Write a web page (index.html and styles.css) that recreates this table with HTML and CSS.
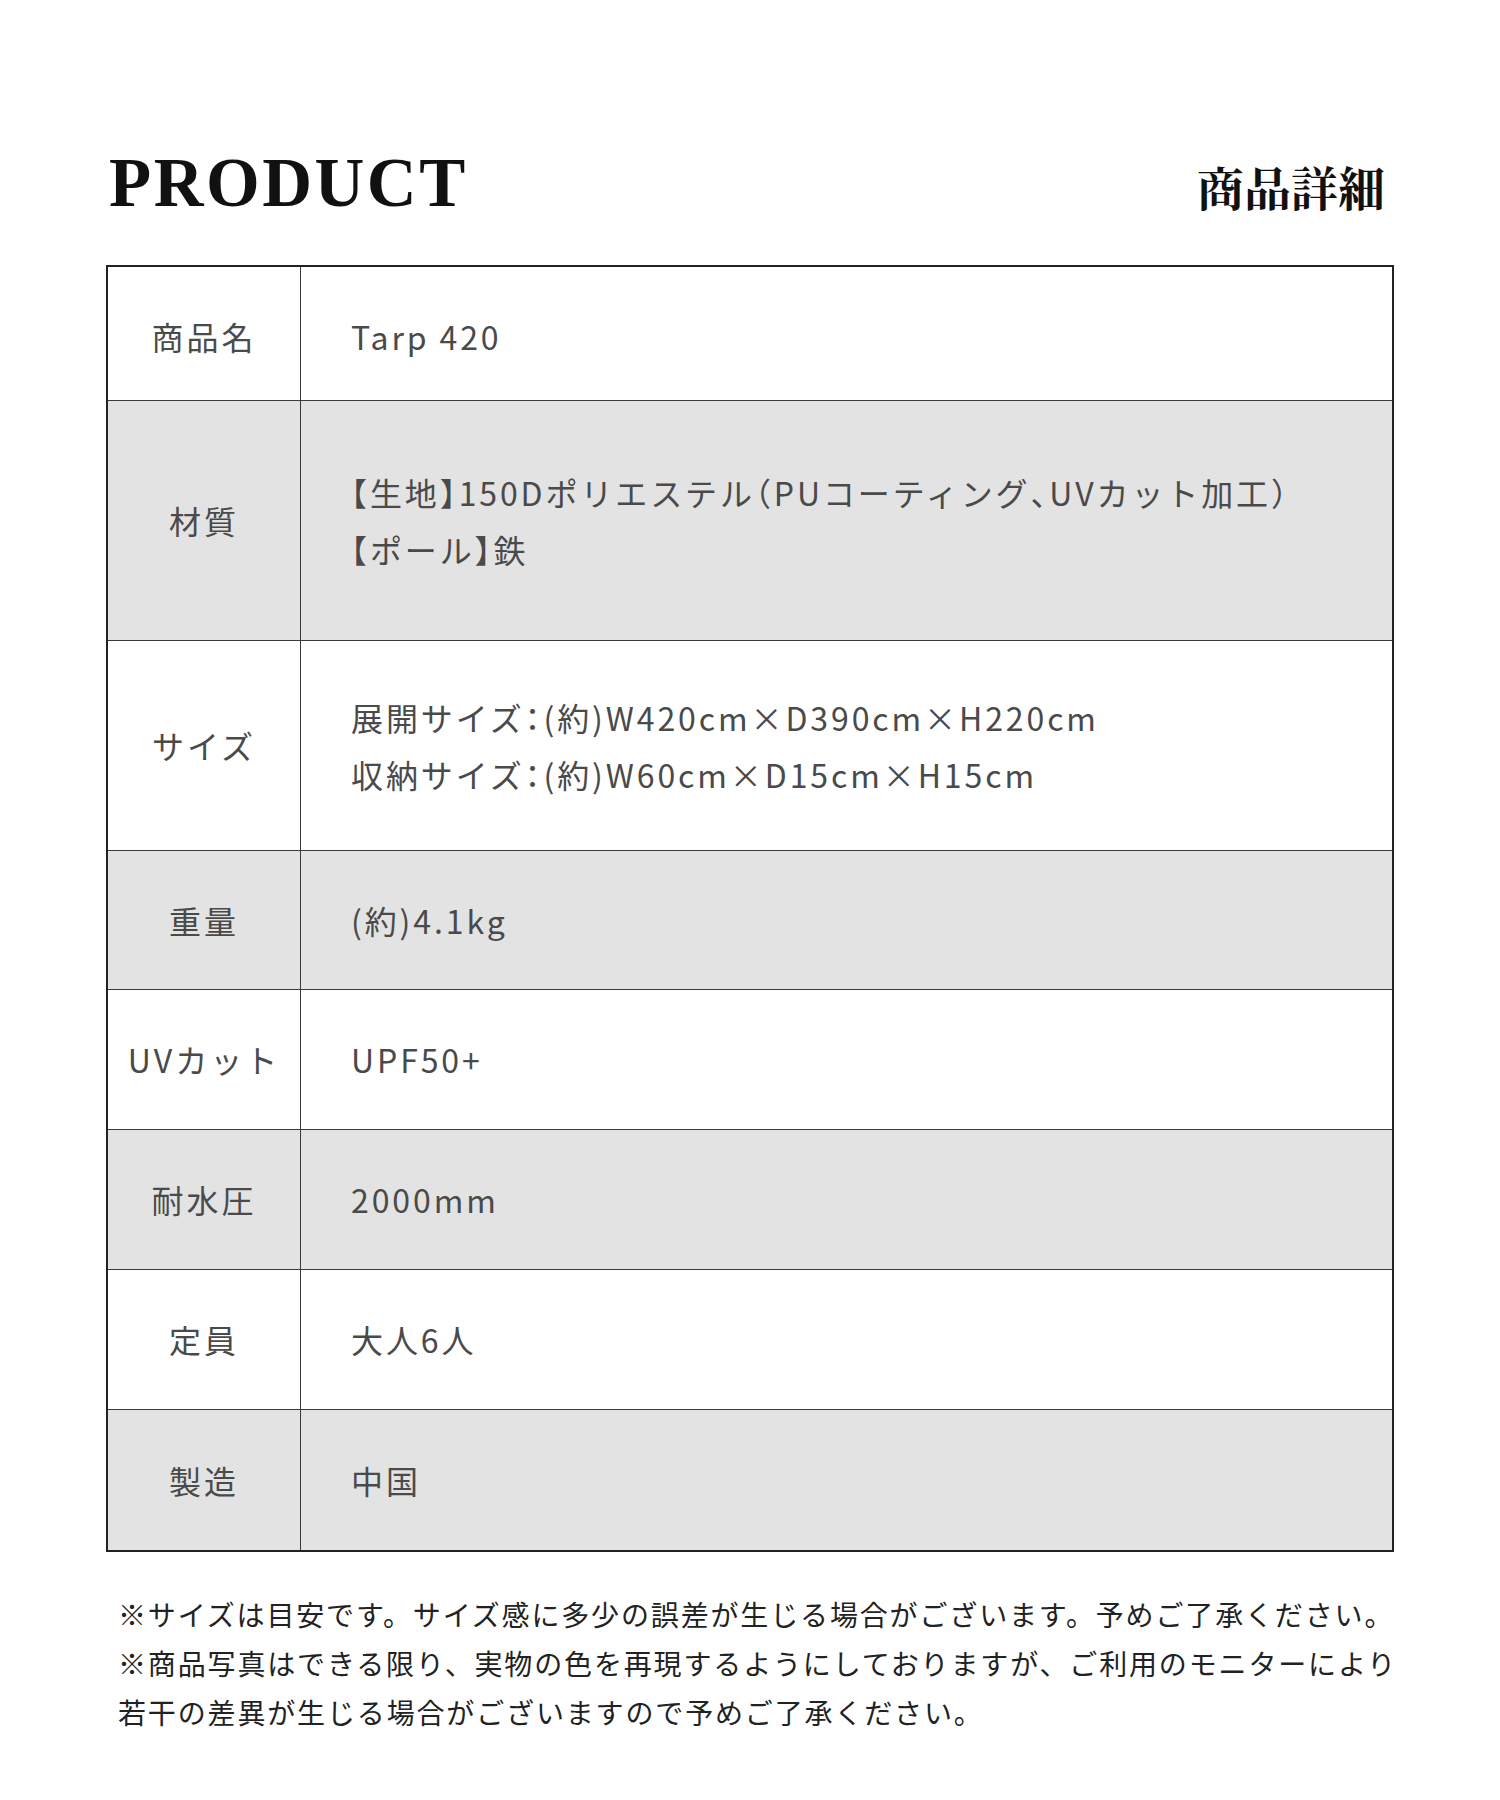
FILE: index.html
```html
<!DOCTYPE html>
<html lang="ja">
<head>
<meta charset="utf-8">
<title>PRODUCT 商品詳細</title>
<link rel="stylesheet" href="styles.css">
</head>
<body>
<div class="page">
  <header class="head">
    <h1 class="title-en">PRODUCT</h1>
    <h2 class="title-ja">商品詳細</h2>
  </header>

  <div class="spec">
    <div class="row h134">
      <div class="label">商品名</div>
      <div class="value">Tarp 420</div>
    </div>
    <div class="row alt h240">
      <div class="label">材質</div>
      <div class="value">
        <p><span class="ht">【</span>生地<span class="ht">】</span>150Dポリエステル<span class="ht">（</span>PUコーティング<span class="ht">、</span>UVカット加工<span class="ht">）</span></p>
        <p><span class="ht">【</span>ポール<span class="ht">】</span>鉄</p>
      </div>
    </div>
    <div class="row h210">
      <div class="label">サイズ</div>
      <div class="value">
        <p>展開サイズ<span class="ht">：</span>(約)W420cm×D390cm×H220cm</p>
        <p>収納サイズ<span class="ht">：</span>(約)W60cm×D15cm×H15cm</p>
      </div>
    </div>
    <div class="row alt h139">
      <div class="label">重量</div>
      <div class="value">(約)4.1kg</div>
    </div>
    <div class="row">
      <div class="label">UVカット</div>
      <div class="value">UPF50+</div>
    </div>
    <div class="row alt">
      <div class="label">耐水圧</div>
      <div class="value">2000mm</div>
    </div>
    <div class="row">
      <div class="label">定員</div>
      <div class="value">大人6人</div>
    </div>
    <div class="row alt">
      <div class="label">製造</div>
      <div class="value">中国</div>
    </div>
  </div>

  <div class="notes">
    <p>※サイズは目安です。サイズ感に多少の誤差が生じる場合がございます。予めご了承ください。</p>
    <p>※商品写真はできる限り、実物の色を再現するようにしておりますが、ご利用のモニターにより<br>若干の差異が生じる場合がございますので予めご了承ください。</p>
  </div>
</div>
</body>
</html>
```

FILE: styles.css
```css
html, body {
  margin: 0;
  padding: 0;
  background: #ffffff;
}

.page {
  width: 1288px;
  margin: 0 auto;
  padding-top: 148px;
  font-family: "Noto Sans CJK JP", "Noto Sans", sans-serif;
}

.head {
  display: flex;
  justify-content: space-between;
  align-items: baseline;
  height: 70px;
}

.title-en {
  margin: 0 0 0 3px;
  font-family: "Liberation Serif", serif;
  font-weight: 700;
  font-size: 69px;
  line-height: 70px;
  letter-spacing: 2.5px;
  color: #111111;
}

.title-ja {
  margin: 0 9px 0 0;
  font-family: "Noto Serif CJK JP", "Noto Sans CJK JP", serif;
  font-weight: 700;
  font-size: 47px;
  line-height: 70px;
  color: #111111;
}

.spec {
  margin-top: 47px;
  border: 2px solid #222222;
}

.row {
  display: flex;
  box-sizing: border-box;
  min-height: 140px;
  border-bottom: 1px solid #3a3a3a;
  background: #ffffff;
}

.row:last-child {
  border-bottom: 0;
}

.row.alt {
  background: #e3e3e3;
}

.row.h134 { min-height: 134px; padding-top: 6px; }
.row.h240 { min-height: 240px; }
.row.h210 { min-height: 210px; }
.row.h139 { min-height: 139px; }

.label,
.value {
  display: flex;
  flex-direction: column;
  justify-content: center;
  font-size: 32px;
  line-height: 57px;
  letter-spacing: 3px;
  color: #4a4a4a;
}

.label {
  box-sizing: border-box;
  width: 193px;
  flex: none;
  align-items: center;
  text-align: center;
  border-right: 1px solid #3a3a3a;
}

.row.h134 .label {
  margin-top: -6px;
  padding-top: 6px;
}

.value {
  flex: 1;
  padding-left: 50px;
  letter-spacing: 2.9px;
}

.value p {
  margin: 0;
}

.ht {
  font-feature-settings: "halt";
}

.notes {
  margin-top: 38px;
  padding-left: 12px;
  font-size: 28px;
  line-height: 49px;
  letter-spacing: 1.85px;
  color: #222222;
}

.notes p {
  margin: 0;
  white-space: nowrap;
}
```
